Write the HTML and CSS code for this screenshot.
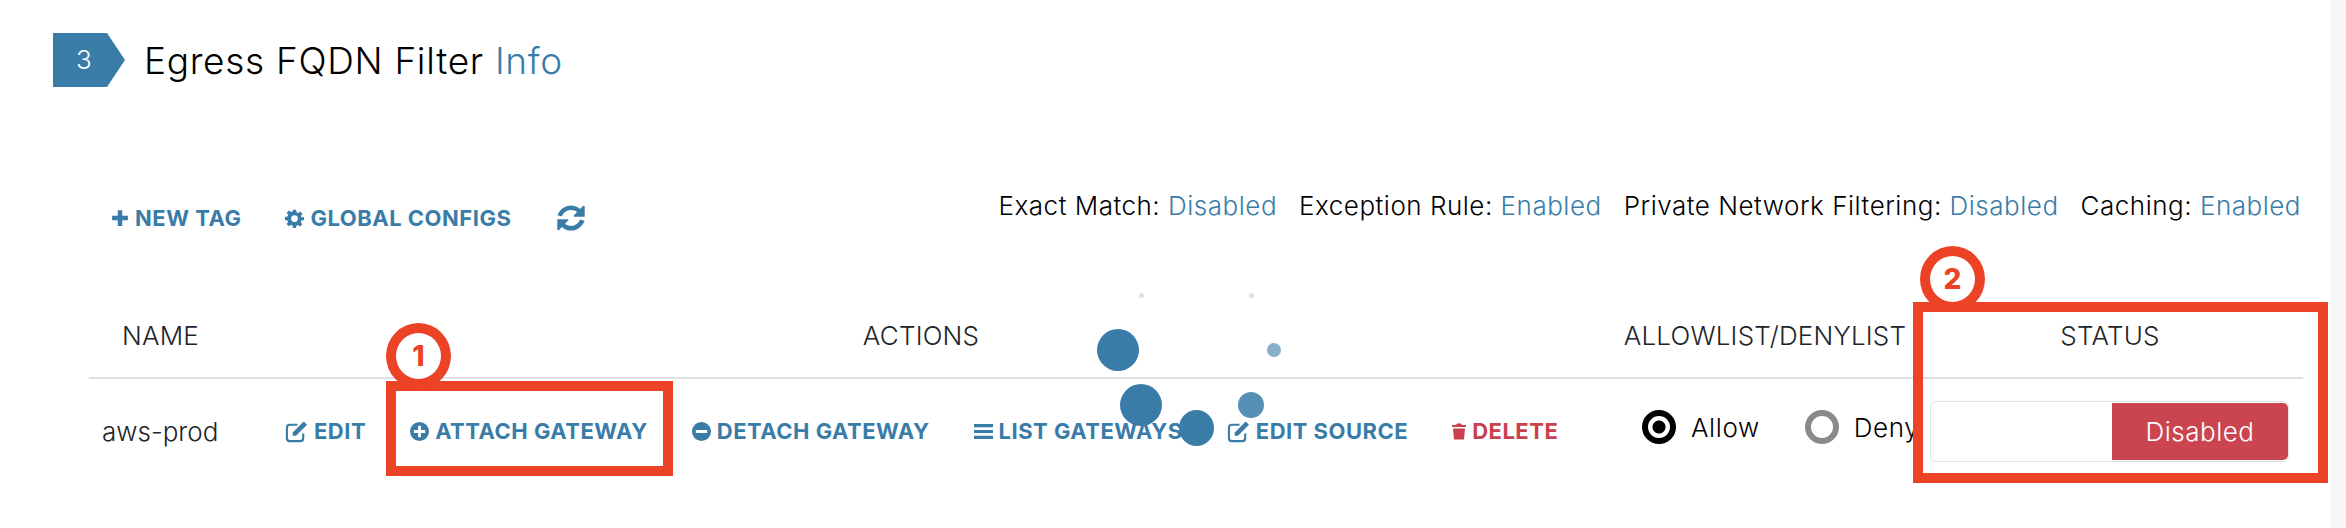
FILE: index.html
```html
<!DOCTYPE html>
<html lang="en">
<head>
    <meta charset="utf-8" />
    <title>Egress FQDN Filter</title>
    <link rel="stylesheet" href="styles.css">
</head>
<body>
<div class="page">
    <header class="step-head">
        <div class="step-badge">3</div>
        <h1 class="step-title">Egress FQDN Filter <a href="#">Info</a></h1>
    </header>

    <div class="toolbar">
        <div class="toolbar-actions">
            <a class="action" href="#">
                <svg class="icon icon-plus" viewBox="0 0 16 16"><path d="M6 1h4v5h5v4h-5v5H6v-5H1V6h5z"/></svg>NEW TAG
            </a>
            <a class="action" href="#">
                <svg class="icon icon-gear" viewBox="0 0 24 24"><path fill-rule="evenodd" d="M10 1h4l.6 3.2 1.900.8 2.700-1.800 2.800 2.800-1.800 2.700.8 1.900L24 10v4l-3.200.6-.8 1.900 1.800 2.700-2.800 2.800-2.700-1.800-1.900.8L14 24h-4l-.6-3.200-1.900-.8-2.700 1.800L2 19l1.800-2.700-.8-1.900L0 14v-4l3.200-.6.8-1.900L2.200 4.800 5 2l2.700 1.800 1.900-.8zM12 8a4.200 4.200 0 1 0 0 8.400A4.200 4.200 0 0 0 12 8z"/></svg>GLOBAL CONFIGS
            </a>
            <a class="refresh" href="#">
                <svg viewBox="0 0 28 28"><path d="M14 3c3.200 0 5.900 1.200 7.900 3.200L24.500 3.500c.6-.6 1.500-.2 1.500.6V13h-8.800c-.8 0-1.200-.9-.6-1.500l2.600-2.600C18.400 7.700 16.400 7 14 7c-3.700 0-6.700 2.300-7.900 5.600l-4-.9C3.900 6.800 8.500 3 14 3zM2 15h8.800c.8 0 1.200.9.6 1.500l-2.600 2.600c1.300 1.200 3.300 1.900 5.200 1.900 3.700 0 6.700-2.300 7.900-5.600l4 .9C24.100 21.200 19.500 25 14 25c-3.200 0-5.900-1.200-7.900-3.200L3.500 24.500c-.6.6-1.500.2-1.500-.6z"/></svg>
            </a>
        </div>
        <div class="filter-info">
            <span>Exact Match: <a href="#">Disabled</a></span>
            <span>Exception Rule: <a href="#">Enabled</a></span>
            <span>Private Network Filtering: <a href="#">Disabled</a></span>
            <span>Caching: <a href="#">Enabled</a></span>
        </div>
    </div>

    <div class="tag-table">
        <div class="table-row table-head">
            <div class="col-name">NAME</div>
            <div class="col-actions">ACTIONS</div>
            <div class="col-list">ALLOWLIST/DENYLIST</div>
            <div class="col-status">STATUS</div>
        </div>
        <div class="table-row table-body">
            <div class="col-name">aws-prod</div>
            <div class="col-actions">
                <a class="action" href="#">
                    <svg class="icon icon-edit" viewBox="0 0 24 24"><path fill="none" stroke="currentColor" stroke-width="2.200" d="M19 14v5a3 3 0 0 1-3 3H5a3 3 0 0 1-3-3V8a3 3 0 0 1 3-3h8"/><path d="M8 13 19.500 1.500l3.500 3.500L11.500 16.500H8z"/></svg>EDIT
                </a>
                <a class="action" href="#">
                    <svg class="icon icon-circle" viewBox="0 0 20 20"><path fill-rule="evenodd" d="M10 0a10 10 0 1 1 0 20a10 10 0 0 1 0-20zM8.500 4v4.500H4v3h4.500V16h3v-4.500H16v-3h-4.500V4z"/></svg>ATTACH GATEWAY
                </a>
                <a class="action" href="#">
                    <svg class="icon icon-circle" viewBox="0 0 20 20"><path fill-rule="evenodd" d="M10 0a10 10 0 1 1 0 20a10 10 0 0 1 0-20zM4 8.500v3h12v-3z"/></svg>DETACH GATEWAY
                </a>
                <a class="action" href="#">
                    <svg class="icon icon-list" viewBox="0 0 18 16"><path d="M0 1h18v3H0zM0 6.500h18v3H0zM0 12h18v3H0z"/></svg>LIST GATEWAYS
                </a>
                <a class="action" href="#">
                    <svg class="icon icon-edit" viewBox="0 0 24 24"><path fill="none" stroke="currentColor" stroke-width="2.200" d="M19 14v5a3 3 0 0 1-3 3H5a3 3 0 0 1-3-3V8a3 3 0 0 1 3-3h8"/><path d="M8 13 19.500 1.500l3.500 3.500L11.500 16.500H8z"/></svg>EDIT SOURCE
                </a>
                <a class="action action-danger" href="#">
                    <svg class="icon icon-trash" viewBox="0 0 14 16"><path d="M5 0h4l1 1.500h4v2H0v-2h4zM1 5h12l-1 11H2z"/></svg>DELETE
                </a>
            </div>
            <div class="col-list">
                <span class="radio radio-on"></span><span class="radio-label">Allow</span>
                <span class="radio"></span><span class="radio-label">Deny</span>
            </div>
            <div class="col-status">
                <div class="toggle"><span class="toggle-state">Disabled</span></div>
            </div>
        </div>
    </div>
</div>

<!-- annotations drawn over the page -->
<div class="callout-box box-one"></div>
<div class="callout-num num-one">1</div>
<div class="callout-box box-two"></div>
<div class="callout-num num-two">2</div>

<!-- loading bubbles -->
<span class="bubble b1"></span>
<span class="bubble b2"></span>
<span class="bubble b3"></span>
<span class="bubble b4"></span>
<span class="bubble b5"></span>
<span class="bubble b6"></span>
<span class="bubble b7"></span>

<div class="side-strip"></div>
</body>
</html>
```

FILE: styles.css
```css
html, body {
    margin: 0;
    padding: 0;
    background-color: #fff;
}

body {
    font-family: 'Inter', 'Liberation Sans', sans-serif;
    color: #000;
    height: 528px;
    overflow: hidden;
}

a {
    color: #3a7ca8;
    text-decoration: none;
}

.page {
    padding: 33px 43px 0 53px;
}

/* step heading */
.step-head {
    display: flex;
    align-items: center;
    height: 54px;
}

.step-badge {
    width: 72px;
    height: 54px;
    background-color: #3a7ca8;
    clip-path: polygon(0 0, 54px 0, 72px 50%, 54px 100%, 0 100%);
    color: #fff;
    font-size: 26px;
    font-weight: 300;
    line-height: 54px;
    text-indent: 23px;
}

.step-title {
    margin: 0 0 0 19px;
    font-size: 37px;
    font-weight: 300;
    letter-spacing: .7px;
}

/* toolbar */
.toolbar {
    display: flex;
    justify-content: space-between;
    align-items: flex-start;
    margin: 107px 0 46px;
    padding-left: 58px;
    height: 48px;
}

.toolbar-actions {
    display: flex;
    align-items: center;
    gap: 44px;
    height: 48px;
}

.action {
    display: inline-flex;
    align-items: center;
    font-size: 22px;
    font-weight: 700;
    letter-spacing: .5px;
    white-space: nowrap;
}

.action-danger {
    color: #c9404d;
}

.icon {
    fill: currentColor;
    flex-shrink: 0;
    margin-right: 6px;
}

.icon-plus { width: 18px; height: 18px; }
.icon-gear { width: 19px; height: 19px; }
.icon-edit { width: 23px; height: 23px; }
.icon-circle { width: 19px; height: 19px; }
.icon-list { width: 19px; height: 17px; }
.icon-trash { width: 14px; height: 17px; }

.refresh svg {
    display: block;
    width: 32px;
    height: 32px;
    fill: #3a7ca8;
}

.filter-info {
    display: flex;
    gap: 22px;
    font-size: 26px;
    font-weight: 300;
    letter-spacing: .51px;
    line-height: 28px;
    white-space: nowrap;
    margin-right: 2px;
    margin-top: -2px;
}

/* table */
.tag-table {
    margin: 0 0 0 36px;
    width: 2214px;
}

.table-row {
    display: grid;
    grid-template-columns: 190px 1284px 354px 386px;
    align-items: center;
}

.table-head {
    height: 83px;
    padding-top: 6px;
    border-bottom: 2px solid #dee2e6;
    font-size: 26px;
    font-weight: 300;
    letter-spacing: .2px;
    color: #212529;
    text-align: center;
}

.table-head .col-name {
    text-align: left;
    padding-left: 33px;
}

.table-head .col-list {
    padding-left: 50px;
}

.table-body {
    height: 104px;
}

.table-body .col-name {
    padding-left: 13px;
    font-size: 26px;
    font-weight: 300;
    color: #212529;
}

.table-body .col-actions {
    display: flex;
    align-items: center;
    gap: 44px;
    padding-left: 6px;
}

.table-body .col-list {
    display: flex;
    align-items: center;
    padding-left: 79px;
    margin-top: -8px;
    font-size: 26px;
    font-weight: 300;
    letter-spacing: .6px;
}

.radio {
    box-sizing: border-box;
    width: 34px;
    height: 34px;
    border: 6px solid #8a8a8a;
    border-radius: 50%;
    flex-shrink: 0;
}

.radio-on {
    border: 6px solid #000;
    background: radial-gradient(circle, #000 0 6px, #fff 7px);
}

.radio-label {
    margin: 0 45px 0 15px;
}

.table-body .col-status {
    padding-left: 13px;
}

.toggle {
    box-sizing: border-box;
    display: flex;
    justify-content: flex-end;
    width: 359px;
    height: 61px;
    border: 1px solid #dee2e6;
    border-radius: 6px;
    padding: 1px 0;
}

.toggle-state {
    width: 176px;
    background-color: #ca4550;
    border-radius: 0 5px 5px 0;
    color: #fff;
    font-size: 26px;
    font-weight: 300;
    letter-spacing: .5px;
    line-height: 57px;
    text-align: center;
}

/* annotations */
.callout-box {
    position: absolute;
    box-sizing: border-box;
    border: 10px solid #ec4226;
}

.box-one {
    left: 386px;
    top: 381px;
    width: 287px;
    height: 95px;
}

.box-two {
    left: 1913px;
    top: 302px;
    width: 415px;
    height: 181px;
}

.callout-num {
    position: absolute;
    box-sizing: border-box;
    width: 65px;
    height: 66px;
    border: 10px solid #ec4226;
    border-radius: 50%;
    background-color: #fff;
    color: #ec4226;
    font-size: 28px;
    font-weight: 800;
    line-height: 46px;
    text-align: center;
}

.num-one { left: 386px; top: 323px; }
.num-two { left: 1920px; top: 246px; }

/* bubbles */
.bubble {
    position: absolute;
    border-radius: 50%;
    background-color: #3a7ca8;
}

.b1 { left: 1097px; top: 329px; width: 42px; height: 42px; }
.b2 { left: 1120px; top: 384px; width: 42px; height: 42px; }
.b3 { left: 1179px; top: 410px; width: 35px; height: 36px; }
.b4 { left: 1238px; top: 392px; width: 26px; height: 26px; opacity: .85; }
.b5 { left: 1267px; top: 343px; width: 14px; height: 14px; opacity: .6; }
.b6 { left: 1139px; top: 293px; width: 5px; height: 5px; opacity: .2; }
.b7 { left: 1249px; top: 293px; width: 5px; height: 5px; opacity: .2; }

.side-strip {
    position: absolute;
    top: 0;
    right: 0;
    width: 16px;
    height: 528px;
    background-color: #f7f7f7;
}
```
